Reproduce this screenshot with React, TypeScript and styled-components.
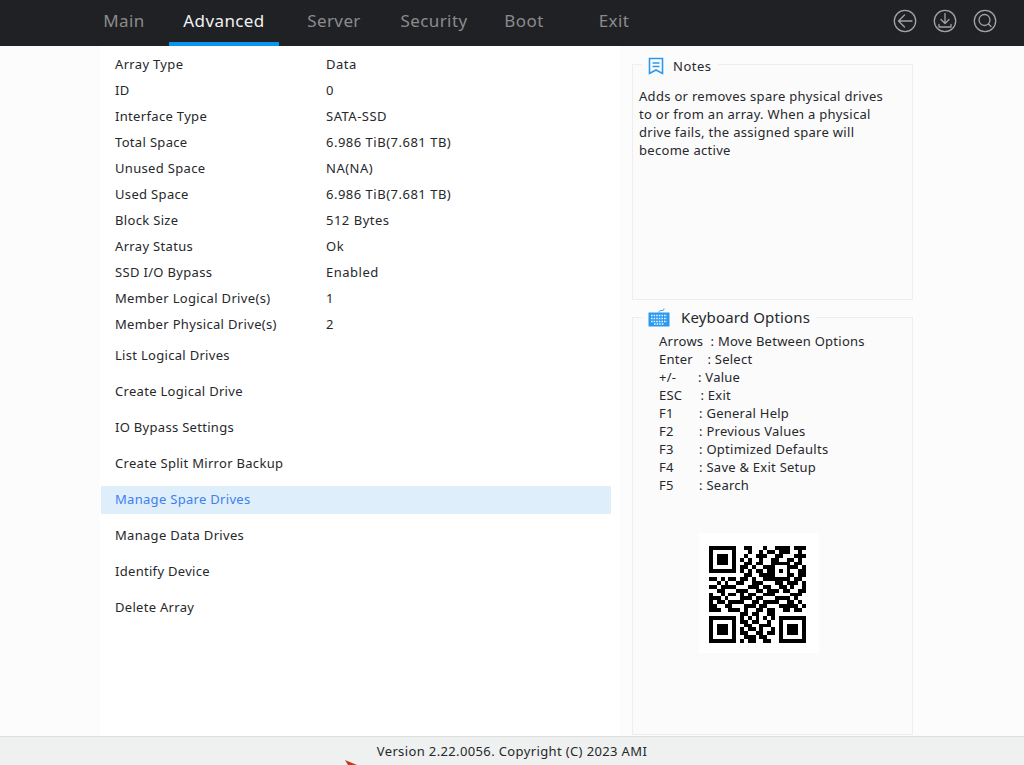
import React from 'react';
import styled, { createGlobalStyle } from 'styled-components';

const GlobalStyle = createGlobalStyle`
  html, body {
    margin: 0;
    padding: 0;
    background: #fff;
  }
  body {
    font-family: "Noto Sans", "Open Sans", sans-serif;
    color: #26282c;
  }
`;

const Page = styled.div`
  display: flex;
  flex-direction: column;
  height: 765px;
  overflow: hidden;
  position: relative;
`;

const TopBar = styled.header`
  display: flex;
  align-items: stretch;
  height: 46px;
  flex: none;
  padding-left: 79px;
  background: #202125;
`;

const Tab = styled.div<{ $width: number; $active?: boolean }>`
  width: ${({ $width }) => $width}px;
  display: flex;
  justify-content: center;
  padding-top: 9px;
  box-sizing: border-box;
  height: 46px;
  font-size: 17px;
  line-height: 24px;
  letter-spacing: 0.4px;
  color: ${({ $active }) => ($active ? '#f2f2f2' : '#8b8b8b')};
  border-bottom: 4px solid ${({ $active }) => ($active ? '#0a96ee' : 'transparent')};
`;

const TopIcons = styled.div`
  margin-left: auto;
  display: flex;
  align-items: flex-start;
  gap: 16px;
  padding: 9px 27px 0 0;
`;

const Body = styled.div`
  flex: 1;
  display: flex;
  min-height: 0;
  background: #fcfcfc;
`;

const MainColumn = styled.main`
  width: 520px;
  margin-left: 100px;
  padding-top: 5px;
  box-sizing: border-box;
  background: #fff;
`;

const InfoRow = styled.div`
  display: flex;
  align-items: center;
  height: 26px;
  padding-left: 15px;
  font-size: 13px;
  letter-spacing: 0.33px;
`;

const InfoLabel = styled.span`
  width: 211px;
`;

const InfoValue = styled.span`
  letter-spacing: 0.5px;
`;

const ActionList = styled.div`
  display: flex;
  flex-direction: column;
  gap: 8px;
  margin-top: 5px;
`;

const ActionRow = styled.div<{ $selected?: boolean }>`
  display: flex;
  align-items: center;
  width: 510px;
  height: 28px;
  margin-left: 1px;
  padding: 0 0 2px 14px;
  box-sizing: border-box;
  font-size: 13px;
  letter-spacing: 0.3px;
  color: ${({ $selected }) => ($selected ? '#3f7ff0' : '#26282c')};
  background: ${({ $selected }) => ($selected ? '#deeefa' : 'transparent')};
`;

const SideColumn = styled.aside`
  width: 281px;
  margin-left: 12px;
  display: flex;
  flex-direction: column;
  padding-top: 7px;
`;

const Panel = styled.fieldset<{ $height: number }>`
  margin: 0;
  padding: 0;
  height: ${({ $height }) => $height}px;
  box-sizing: border-box;
  min-width: 0;
  border: 1px solid #eeeeee;
  background: #fbfbfb;
`;

const NotesPanel = styled(Panel)`
  margin-bottom: 7px;
`;

const Legend = styled.legend<{ $top?: number }>`
  display: flex;
  align-items: center;
  margin-left: 9px;
  padding: ${({ $top }) => $top ?? 0}px 6px 0;
`;

const NotesTitle = styled.span`
  margin-left: 9px;
  font-size: 13px;
  letter-spacing: 0.5px;
`;

const KeyboardTitle = styled.span`
  margin-left: 11px;
  font-size: 15px;
  letter-spacing: 0.15px;
`;

const NotesText = styled.p`
  margin: 12px 20px 0 6px;
  font-size: 13px;
  line-height: 18px;
  letter-spacing: 0.3px;
`;

const KeyList = styled.div`
  display: flex;
  flex-direction: column;
  padding: 5px 0 0 26px;
`;

const KeyLine = styled.div`
  height: 18px;
  font-size: 13px;
  line-height: 18px;
  letter-spacing: 0.25px;
  white-space: pre;
`;

const QrTile = styled.div`
  display: flex;
  align-items: center;
  justify-content: center;
  width: 120px;
  height: 120px;
  margin: 39px 0 0 66px;
  padding: 3px 3px 0 0;
  box-sizing: border-box;
  background: #fff;
`;

const Footer = styled.footer`
  display: flex;
  align-items: center;
  justify-content: center;
  flex: none;
  height: 29px;
  padding-bottom: 1px;
  box-sizing: border-box;
  border-top: 1px solid #dcdedd;
  background: #eef1f0;
  font-size: 13px;
  letter-spacing: 0.37px;
`;

const Cursor = styled.svg`
  position: absolute;
  left: 344px;
  top: 759px;
`;

const tabs = [
  { label: 'Main', width: 90 },
  { label: 'Advanced', width: 110, active: true },
  { label: 'Server', width: 110 },
  { label: 'Security', width: 90 },
  { label: 'Boot', width: 90 },
  { label: 'Exit', width: 90 },
];

const info = [
  ['Array Type', 'Data'],
  ['ID', '0'],
  ['Interface Type', 'SATA-SSD'],
  ['Total Space', '6.986 TiB(7.681 TB)'],
  ['Unused Space', 'NA(NA)'],
  ['Used Space', '6.986 TiB(7.681 TB)'],
  ['Block Size', '512 Bytes'],
  ['Array Status', 'Ok'],
  ['SSD I/O Bypass', 'Enabled'],
  ['Member Logical Drive(s)', '1'],
  ['Member Physical Drive(s)', '2'],
];

const actions = [
  'List Logical Drives',
  'Create Logical Drive',
  'IO Bypass Settings',
  'Create Split Mirror Backup',
  'Manage Spare Drives',
  'Manage Data Drives',
  'Identify Device',
  'Delete Array',
];

const keys = [
  'Arrows  : Move Between Options',
  'Enter    : Select',
  '+/-      : Value',
  'ESC     : Exit',
  'F1       : General Help',
  'F2       : Previous Values',
  'F3       : Optimized Defaults',
  'F4       : Save & Exit Setup',
  'F5       : Search',
];

const qrRows = [
  '1111111001100010011110111',
  '1000001000100101101110010',
  '1011101001001110011000111',
  '1011101010100100110011010',
  '1011101001101100111110110',
  '1000001011010011100011101',
  '1111111010101101101010011',
  '0000000001100111100011011',
  '1101011011010011111110110',
  '0010100110011100011011101',
  '1101111000111011001101001',
  '0011000111001101110110011',
  '1001011010110011100001110',
  '1110100011101100011110100',
  '1011011110011011110011010',
  '1100110001110110001111101',
  '1110011101001101100110110',
  '0000000011011001100000000',
  '1111111010101010101111111',
  '1000001011011001001000001',
  '1011101001100111001011101',
  '1011101010110100101011101',
  '1011101011001101101011101',
  '1000001001110110001000001',
  '1111111010110011001111111',
];

function CircleIcon({ children }: { children: React.ReactNode }) {
  return (
    <svg width="24" height="24" viewBox="0 0 24 24" fill="none" stroke="#a3a3a3" strokeWidth="1.3" strokeLinecap="round" strokeLinejoin="round">
      <circle cx="12" cy="12" r="10.7" />
      {children}
    </svg>
  );
}

function QrCode() {
  return (
    <svg width="97" height="97" viewBox="0 0 25 25" shapeRendering="crispEdges">
      {qrRows.map((row, y) =>
        row.split('').map((cell, x) =>
          cell === '1' ? <rect key={`${x}-${y}`} x={x} y={y} width="1" height="1" fill="#000" /> : null
        )
      )}
    </svg>
  );
}

export default function App() {
  return (
    <Page>
      <GlobalStyle />
      <TopBar>
        {tabs.map((tab) => (
          <Tab key={tab.label} $width={tab.width} $active={tab.active}>
            {tab.label}
          </Tab>
        ))}
        <TopIcons>
          <CircleIcon>
            <path d="M5.5 12H19M11.5 6L5.5 12L11.5 18" />
          </CircleIcon>
          <CircleIcon>
            <path d="M12 4.5V14.5M8 10.5L12 14.5L16 10.5M6 15.5V18H18V15.5" />
          </CircleIcon>
          <CircleIcon>
            <circle cx="11.5" cy="11" r="5.5" />
            <path d="M15.5 15L18 17.5" />
          </CircleIcon>
        </TopIcons>
      </TopBar>

      <Body>
        <MainColumn>
          {info.map(([label, value]) => (
            <InfoRow key={label}>
              <InfoLabel>{label}</InfoLabel>
              <InfoValue>{value}</InfoValue>
            </InfoRow>
          ))}
          <ActionList>
            {actions.map((action) => (
              <ActionRow key={action} $selected={action === 'Manage Spare Drives'}>
                {action}
              </ActionRow>
            ))}
          </ActionList>
        </MainColumn>

        <SideColumn>
          <NotesPanel $height={247}>
            <Legend $top={4}>
              <svg width="16" height="18" viewBox="0 0 16 18" fill="none" stroke="#2a9af0" strokeWidth="1.6">
                <path d="M1.5 1.5H14.5V16.5L8 13L1.5 16.5Z" />
                <path d="M4.5 6H11.5M4.5 9.5H11.5" />
              </svg>
              <NotesTitle>Notes</NotesTitle>
            </Legend>
            <NotesText>
              Adds or removes spare physical drives to or from an array. When a physical drive fails, the assigned
              spare will become active
            </NotesText>
          </NotesPanel>

          <Panel $height={428}>
            <Legend>
              <svg width="22" height="19" viewBox="0 0 22 19">
                <path d="M11 4.5C11 2.5 12 2.5 14 2.5S16 1.5 16 0.5" fill="none" stroke="#2a9af0" strokeWidth="1" />
                <rect x="0.5" y="4.5" width="21" height="14" fill="#2a9af0" />
                <path
                  d="M3 7.5H19M3 10.5H19M3 13.5H19M6 16H16"
                  stroke="#e6f4ff"
                  strokeWidth="1.4"
                  strokeDasharray="1.6 1"
                />
              </svg>
              <KeyboardTitle>Keyboard Options</KeyboardTitle>
            </Legend>
            <KeyList>
              {keys.map((line) => (
                <KeyLine key={line}>{line}</KeyLine>
              ))}
            </KeyList>
            <QrTile>
              <QrCode />
            </QrTile>
          </Panel>
        </SideColumn>
      </Body>

      <Footer>Version 2.22.0056. Copyright (C) 2023 AMI</Footer>
      <Cursor width="14" height="6" viewBox="0 0 14 6">
        <path d="M1 1L13 6H4Z" fill="#c8391c" />
      </Cursor>
    </Page>
  );
}
